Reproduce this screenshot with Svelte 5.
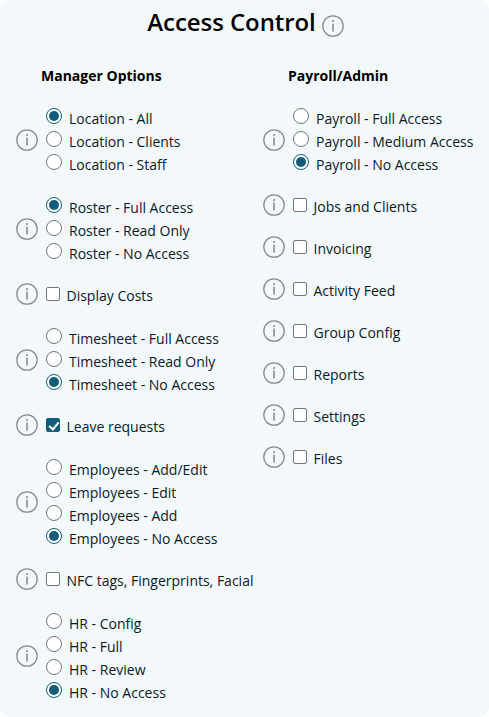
<script>
  const manager = [
    { options: ['Location - All', 'Location - Clients', 'Location - Staff'], checked: 0 },
    { options: ['Roster - Full Access', 'Roster - Read Only', 'Roster - No Access'], checked: 0 },
    { label: 'Display Costs' },
    { options: ['Timesheet - Full Access', 'Timesheet - Read Only', 'Timesheet - No Access'], checked: 2 },
    { label: 'Leave requests', on: true },
    { options: ['Employees - Add/Edit', 'Employees - Edit', 'Employees - Add', 'Employees - No Access'], checked: 3 },
    { label: 'NFC tags, Fingerprints, Facial' },
    { options: ['HR - Config', 'HR - Full', 'HR - Review', 'HR - No Access'], checked: 3 }
  ]

  const payroll = [
    { options: ['Payroll - Full Access', 'Payroll - Medium Access', 'Payroll - No Access'], checked: 2 },
    { label: 'Jobs and Clients' },
    { label: 'Invoicing' },
    { label: 'Activity Feed' },
    { label: 'Group Config' },
    { label: 'Reports' },
    { label: 'Settings' },
    { label: 'Files' }
  ]

  const columns = [
    { title: 'Manager Options', rows: manager },
    { title: 'Payroll/Admin', rows: payroll }
  ]
</script>

{#snippet info()}
  <svg class="info" viewBox="0 0 22 22" width="22" height="22" aria-hidden="true">
    <circle cx="11" cy="11" r="10.2" fill="none" stroke="#8c8c8c" stroke-width="1.3" />
    <rect x="10.2" y="8.6" width="1.7" height="8" fill="#8f9499" />
    <rect x="10.2" y="5" width="1.7" height="2" fill="#8f9499" />
  </svg>
{/snippet}

<div class="panel">
  <h2>Access Control {@render info()}</h2>

  <div class="columns">
    {#each columns as col, c}
      <section>
        <h3>{col.title}</h3>
        <div class="rows">
          {#each col.rows as row, r}
            <div class="row">
              {@render info()}
              {#if row.options}
                <div class="radios">
                  {#each row.options as opt, i}
                    <label class="radio">
                      <input type="radio" name={`g${c}-${r}`} checked={i === row.checked} />
                      <span>{opt}</span>
                    </label>
                  {/each}
                </div>
              {:else}
                <label class="check">
                  <input type="checkbox" checked={row.on} />
                  <span>{row.label}</span>
                </label>
              {/if}
            </div>
          {/each}
        </div>
      </section>
    {/each}
  </div>
</div>

<style>
  :global(body) {
    background: #fff;
    font-family: "Open Sans", sans-serif;
    color: #0b1a26;
  }

  .panel {
    height: 717px;
    box-sizing: border-box;
    background: #f3f8fb;
    border-radius: 10px;
    padding: 6px 0 0 16px;
    overflow: hidden;
  }

  h2 {
    margin: 0;
    height: 36px;
    box-sizing: border-box;
    padding: 0 14px 4px 0;
    display: flex;
    align-items: center;
    justify-content: center;
    gap: 6px;
    font-size: 24px;
    font-weight: 600;
    letter-spacing: -0.07px;
    line-height: 32px;
    color: #000;
  }

  h2 .info {
    margin-top: 8px;
  }

  .columns {
    display: grid;
    grid-template-columns: 247px 1fr;
    margin-top: 24px;
  }

  h3 {
    margin: 0 0 21px 25px;
    font-size: 14px;
    font-weight: 700;
    line-height: 20px;
    color: #000;
  }

  .rows {
    display: flex;
    flex-direction: column;
    gap: 20px;
  }

  .row {
    display: flex;
    align-items: center;
    gap: 8px;
  }

  .row .info {
    margin-top: -4px;
  }

  .info {
    flex: none;
    display: block;
  }

  .radios {
    display: flex;
    flex-direction: column;
  }

  label {
    display: flex;
    align-items: center;
    font-size: 14px;
  }

  .radio {
    height: 23px;
  }

  .check {
    height: 22px;
    box-sizing: border-box;
    padding-bottom: 2px;
  }

  input {
    appearance: none;
    flex: none;
    margin: 0;
    position: relative;
    background: #fff;
  }

  .radio input {
    width: 16px;
    height: 16px;
    margin-right: 7px;
    top: -3px;
    border: 1px solid #767676;
    border-radius: 50%;
    box-sizing: border-box;
  }

  .radio input:checked {
    border-color: #0f5d78;
  }

  .radio input:checked::after {
    content: "";
    position: absolute;
    inset: 2px;
    border-radius: 50%;
    background: #0f5d78;
  }

  .check input {
    width: 14px;
    height: 14px;
    margin-right: 6.5px;
    top: -1px;
    border: 1px solid #767676;
    border-radius: 2px;
    box-sizing: border-box;
  }

  .check input:checked {
    background: #0f5d78;
    border-color: #0f5d78;
  }

  .check input:checked::after {
    content: "";
    position: absolute;
    left: 3.5px;
    top: 0.5px;
    width: 4px;
    height: 8px;
    border: solid #fff;
    border-width: 0 2px 2px 0;
    transform: rotate(40deg);
  }
</style>
